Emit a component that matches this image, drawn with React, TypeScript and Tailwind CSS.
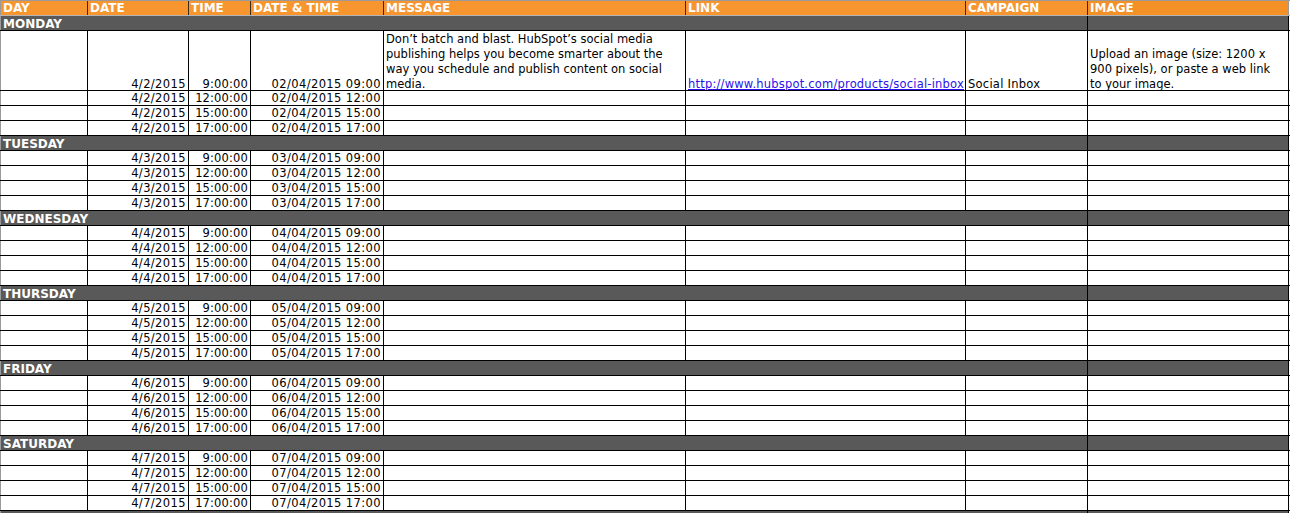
import React from "react";

const W = ["w-[87px]", "w-[101px]", "w-[62px]", "w-[133px]", "w-[302px]", "w-[280px]", "w-[122px]", "w-[202px]"];

const days = [
  { name: "MONDAY", d: "4/2/2015", dd: "02/04/2015" },
  { name: "TUESDAY", d: "4/3/2015", dd: "03/04/2015" },
  { name: "WEDNESDAY", d: "4/4/2015", dd: "04/04/2015" },
  { name: "THURSDAY", d: "4/5/2015", dd: "05/04/2015" },
  { name: "FRIDAY", d: "4/6/2015", dd: "06/04/2015" },
  { name: "SATURDAY", d: "4/7/2015", dd: "07/04/2015" },
];
const times = [
  ["9:00:00", "09:00"],
  ["12:00:00", "12:00"],
  ["15:00:00", "15:00"],
  ["17:00:00", "17:00"],
];

function Header() {
  const cols = ["DAY", "DATE", "TIME", "DATE & TIME", "MESSAGE", "LINK", "CAMPAIGN", "IMAGE"];
  return (
    <div className="flex border-t border-b border-t-[#9a9a9a] border-b-[#b5b5b5] h-[16px]">
      {cols.map((c, i) => (
        <div
          key={c}
          className={`${W[i]} h-[14px] shrink-0 ${i === 0 ? "border-l border-l-[#9a9a9a]" : "border-l border-l-[#3a2a1a]"} ${i === 7 ? "border-r border-r-[#9a9a9a] bg-[#f39026]" : "bg-[#f7952f]"} pl-[2px] font-bold text-white text-[12px] leading-[14px] whitespace-nowrap overflow-hidden`}
        >
          {c}
        </div>
      ))}
    </div>
  );
}

function DayRow({ name }: { name: string }) {
  return (
    <div className="flex h-[15px] border-b border-black">
      <div className="w-[1087px] shrink-0 h-[14px] bg-[#595959] border-l border-l-[#9a9a9a] pl-[2px] font-bold text-white text-[12px] leading-[17px] whitespace-nowrap overflow-hidden">
        {name}
      </div>
      <div className="w-[202px] shrink-0 h-[14px] bg-[#595959] border-l border-r border-black" />
    </div>
  );
}

function Cell({ i, children, right, tall, top, num }: { i: number; children?: React.ReactNode; right?: boolean; tall?: boolean; top?: boolean; num?: boolean }) {
  return (
    <div
      className={`${W[i]} shrink-0 ${tall ? "h-[59px]" : "h-[14px]"} flex flex-col ${top ? "justify-start" : "justify-end"} ${i === 0 ? "border-l border-l-[#9a9a9a]" : "border-l border-black"} ${i === 7 ? "border-r border-r-black" : ""} ${right ? "items-end pr-[2px]" : "items-start pl-[2px]"} ${num ? "tracking-[0.4px]" : ""} overflow-hidden whitespace-nowrap ${tall ? "leading-[15px]" : "leading-[15px]"}`}
    >
      <div className={tall ? (top ? "translate-y-[1px]" : "translate-y-[2px]") : "translate-y-[1px]"}>{children}</div>
    </div>
  );
}

function DataRow({ d, dd, t, tall }: { d: string; dd: string; t: string[]; tall?: boolean }) {
  return (
    <div className="flex border-b border-black">
      <Cell i={0} tall={tall} />
      <Cell i={1} right tall={tall} num>
        <span>{d}</span>
      </Cell>
      <Cell i={2} right tall={tall}>
        <span className="tracking-[0.15px]">{t[0]}</span>
      </Cell>
      <Cell i={3} right tall={tall} num>
        <span>{`${dd} ${t[1]}`}</span>
      </Cell>
      <Cell i={4} tall={tall} top>
        {tall ? (
          <span>
            Don’t batch and blast. HubSpot’s social media
            <br />
            publishing helps you become smarter about the
            <br />
            way you schedule and publish content on social
            <br />
            media.
          </span>
        ) : null}
      </Cell>
      <Cell i={5} tall={tall}>
        {tall ? <span className="text-[#2a13e8] underline underline-offset-1 tracking-[0.2px]">http://www.hubspot.com/products/social-inbox</span> : null}
      </Cell>
      <Cell i={6} tall={tall}>
        {tall ? <span className="tracking-[0.25px]">Social Inbox</span> : null}
      </Cell>
      <Cell i={7} tall={tall}>
        {tall ? (
          <span>
            Upload an image (size: 1200 x
            <br />
            900 pixels), or paste a web link
            <br />
            to your image.
          </span>
        ) : null}
      </Cell>
    </div>
  );
}

export default function App() {
  return (
    <div className="w-[1290px] h-[513px] overflow-hidden bg-white font-['DejaVu_Sans',sans-serif] text-[11.5px] text-black">
      <Header />
      {days.map((day, di) => (
        <div key={day.name}>
          <DayRow name={day.name} />
          {times.map((t, ti) => (
            <DataRow key={ti} d={day.d} dd={day.dd} t={t} tall={di === 0 && ti === 0} />
          ))}
        </div>
      ))}
      <DayRow name="" />
    </div>
  );
}
